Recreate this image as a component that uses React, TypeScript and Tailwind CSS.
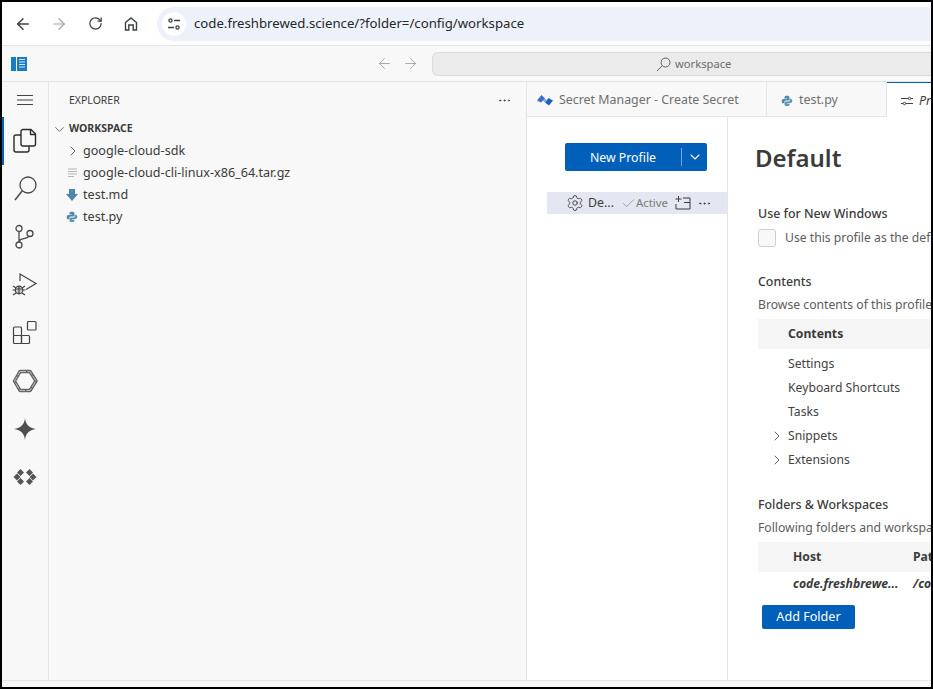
import React from "react";
import { ArrowLeft, ArrowRight, RotateCw, ChevronRight, ChevronDown, Settings, Check, MoreHorizontal } from "lucide-react";

function Py({ s = 12 }: { s?: number }) {
  return (
    <svg width={s} height={s} viewBox="0 0 16 16" className="shrink-0">
      <path d="M8 1C5.6 1 4.6 1.9 4.6 3.2V4.8H8.2V5.4H3.1C1.8 5.4 1 6.5 1 8.2s.8 2.9 2.1 2.9H4.4V9.3c0-1.2 1-2.1 2.2-2.1h2.9c1 0 1.8-.8 1.8-1.8V3.2C11.3 1.9 10 1 8 1Z" fill="#4f87ab" />
      <path d="M8 15c2.4 0 3.4-.9 3.4-2.2v-1.6H7.8v-.6h5.1c1.3 0 2.1-1.1 2.1-2.8s-.8-2.9-2.1-2.9h-1.3v1.8c0 1.2-1 2.1-2.2 2.1H6.5c-1 0-1.8.8-1.8 1.8v2.2C4.7 14.1 6 15 8 15Z" fill="#5f97b8" />
    </svg>
  );
}

function Row({ icon, children }: { icon: React.ReactNode; children: React.ReactNode }) {
  return (
    <div className="flex h-[22px] items-center text-[12.6px] text-[#3b3b3b]">
      <div className="flex w-[34px] shrink-0 justify-end pr-[5px]">{icon}</div>
      <span>{children}</span>
    </div>
  );
}

function TreeItem({ arrow, children }: { arrow?: boolean; children: React.ReactNode }) {
  return (
    <div className="flex h-6 items-center text-[12.2px] text-[#424242]">
      <div className="flex w-[30px] shrink-0 justify-end pr-[3px]">
        {arrow && <ChevronRight size={16} strokeWidth={1.2} className="text-[#424242]" />}
      </div>
      <span>{children}</span>
    </div>
  );
}

function ActivityIcon({ children, active }: { children: React.ReactNode; active?: boolean }) {
  return (
    <div className={`flex h-12 w-full items-center justify-center ${active ? "border-l-2 border-[#005fb8] pr-[2px]" : ""}`}>
      {children}
    </div>
  );
}

export default function App() {
  return (
    <div
      className="flex h-[689px] w-[933px] flex-col overflow-hidden border-2 border-black bg-white"
      style={{ fontFamily: '"Noto Sans", "Open Sans", sans-serif' }}
    >
      {/* Browser bar */}
      <div className="flex h-[44px] shrink-0 items-center border-b border-[#e4e4e4] bg-white">
        <div className="flex w-[155px] shrink-0 items-center pl-[12px]">
          <ArrowLeft size={18} strokeWidth={2} className="text-[#3c4043]" />
          <ArrowRight size={18} strokeWidth={1.6} className="ml-[18px] text-[#a6a8ab]" />
          <RotateCw size={15} strokeWidth={2} className="ml-[20px] text-[#3c4043]" />
          <svg width="16" height="16" viewBox="0 0 16 16" fill="none" stroke="#3c4043" strokeWidth="1.4" className="ml-[20px]">
            <path d="M2.5 14V6.5L8 2l5.5 4.5V14h-3.3V9H5.8v5Z" />
          </svg>
        </div>
        <div className="flex h-[34px] flex-1 items-center rounded-l-[17px] bg-[#edf2fa] pl-[5px]">
          <div className="flex h-[24px] w-[24px] items-center justify-center rounded-full bg-white">
            <svg width="14" height="14" viewBox="0 0 14 14" fill="none" stroke="#3c4043" strokeWidth="1.3">
              <circle cx="3.5" cy="3.5" r="1.6" />
              <path d="M7 3.5h6M1 10.5h6" />
              <circle cx="10.5" cy="10.5" r="1.6" />
            </svg>
          </div>
          <span className="ml-[8px] text-[13.2px] text-[#24272b]">code.freshbrewed.science/?folder=/config/workspace</span>
        </div>
      </div>

      {/* Title bar */}
      <div className="flex h-[36px] shrink-0 items-center border-b border-[#e5e5e5] bg-[#f8f8f8]">
        <svg width="16" height="14" viewBox="0 0 16 14" className="ml-[9px] shrink-0">
          <rect x="0" y="0" width="16" height="14" fill="#1a7cc4" />
          <rect x="5" y="0" width="1" height="14" fill="#f8f8f8" />
          <path d="M8 2.5h6M8 5h6M8 7.5h6M8 10h6" stroke="#d4e6f4" strokeWidth="1" />
        </svg>
        <ArrowLeft size={17} strokeWidth={1} className="ml-[349px] text-[#8a8a8a]" />
        <ArrowRight size={17} strokeWidth={1} className="ml-[9px] text-[#8a8a8a]" />
        <div className="ml-[13px] flex h-[24px] flex-1 items-center rounded-l-[6px] border border-r-0 border-[#dcdcdc] bg-[#ebebeb] pl-[223px] pt-[2px]">
          <svg width="15" height="15" viewBox="0 0 15 15" fill="none" stroke="#5f5f5f" strokeWidth="1">
            <circle cx="9.5" cy="5.5" r="4.5" />
            <path d="M6.3 8.7L1 14" />
          </svg>
          <span className="ml-[4px] text-[11.2px] text-[#6b6b6b]">workspace</span>
        </div>
      </div>

      {/* Workbench */}
      <div className="flex min-h-0 flex-1">
        {/* Activity bar */}
        <div className="flex w-[47px] shrink-0 flex-col border-r border-[#e5e5e5] bg-[#f8f8f8]">
          <div className="flex h-[35px] items-center justify-center">
            <svg width="16" height="12" viewBox="0 0 16 12" stroke="#424242" strokeWidth="1">
              <path d="M0 1.5h16M0 6h16M0 10.5h16" />
            </svg>
          </div>
          <ActivityIcon active>
            <svg width="26" height="26" viewBox="0 0 26 26" fill="none" stroke="#2b2b2b" strokeWidth="1.4" strokeLinejoin="round">
              <path d="M9 7H4a2 2 0 0 0-2 2v13a2 2 0 0 0 2 2h11a2 2 0 0 0 2-2v-4" />
              <path d="M11 1.5h8l4.5 4.5v10a2 2 0 0 1-2 2H11a2 2 0 0 1-2-2v-12.500a2 2 0 0 1 2-2Z" />
              <path d="M18.500 2v4.500h4.500" />
            </svg>
          </ActivityIcon>
          <ActivityIcon>
            <svg width="26" height="26" viewBox="0 0 26 26" fill="none" stroke="#4a4a4a" strokeWidth="1.3">
              <circle cx="16" cy="9" r="8" />
              <path d="M10.300 14.700L3 24" strokeWidth="1.500" />
            </svg>
          </ActivityIcon>
          <ActivityIcon>
            <svg width="26" height="26" viewBox="0 0 26 26" fill="none" stroke="#4a4a4a" strokeWidth="1.3">
              <circle cx="7" cy="4.500" r="3" />
              <circle cx="18" cy="9.500" r="3" />
              <circle cx="7" cy="21" r="3" />
              <path d="M7 7.500V18M7.500 17c1-3 8-1.500 9.500-5" />
            </svg>
          </ActivityIcon>
          <ActivityIcon>
            <svg width="26" height="26" viewBox="0 0 26 26" fill="none" stroke="#424242" strokeWidth="1.2">
              <path d="M8 9V2l16 9.500-10 6" />
              <circle cx="7" cy="18" r="3.800" fill="#5a5a5a" fillOpacity="0.25" />
              <path d="M1 14l3 2M13 14l-3 2M0.500 18h3M13.500 18h-3M1 23l3-2M13 23l-3-2M3.500 17h7M7 14.500V22" />
            </svg>
          </ActivityIcon>
          <ActivityIcon>
            <svg width="26" height="26" viewBox="0 0 26 26" fill="none" stroke="#424242" strokeWidth="1.2">
              <rect x="1.500" y="7" width="8" height="8.500" rx="1" />
              <rect x="1.500" y="15.500" width="8" height="8" rx="1" />
              <rect x="9.500" y="15.500" width="8" height="8" rx="1" />
              <rect x="15.500" y="1.500" width="8.500" height="8.500" rx="1" />
            </svg>
          </ActivityIcon>
          <ActivityIcon>
            <svg width="26" height="26" viewBox="0 0 26 26" fill="none">
              <path d="M8 3.500h10l6 9.500-6 9.500H8L2.500 13Z" stroke="#666666" strokeWidth="3.400" strokeLinejoin="round" />
              <path d="M8 3.500h10l6 9.500-6 9.500H8L2.500 13Z" stroke="#d4d4d4" strokeWidth="0.800" strokeDasharray="6 1.500" strokeLinejoin="round" />
            </svg>
          </ActivityIcon>
          <ActivityIcon>
            <svg width="24" height="24" viewBox="0 0 24 24" fill="#4f4f4f">
              <path d="M12 1c.6 6.400 4 10.200 11 11-7 .8-10.400 4.600-11 11-.6-6.400-4-10.200-11-11 7-.8 10.400-4.600 11-11Z" />
            </svg>
          </ActivityIcon>
          <ActivityIcon>
            <svg width="24" height="18" viewBox="0 0 24 18" fill="#555555">
              <path d="M7.500 1l3.500 3.500L7.500 8 4 4.500ZM16.500 1L20 4.500 16.500 8 13 4.500ZM4 5.500L7.500 9 4 12.500 .5 9ZM20 5.500L23.500 9 20 12.500 16.500 9ZM7.500 10l3.500 3.500L7.500 17 4 13.500ZM16.500 10l3.500 3.500-3.500 3.500-3.500-3.500Z" />
            </svg>
          </ActivityIcon>
        </div>

        {/* Sidebar */}
        <div className="flex w-[478px] shrink-0 flex-col border-r border-[#e5e5e5] bg-[#f8f8f8]">
          <div className="flex h-[36px] shrink-0 items-center justify-between pl-[20px] pr-[14px] pt-[1px]">
            <span className="text-[10.5px] text-[#3b3b3b]">EXPLORER</span>
            <MoreHorizontal size={15} strokeWidth={1.4} className="text-[#424242]" />
          </div>
          <div className="flex h-[22px] items-center pl-[3px]">
            <ChevronDown size={15} strokeWidth={1.2} className="text-[#424242]" />
            <span className="ml-[2px] text-[10.5px] font-bold text-[#3b3b3b]">WORKSPACE</span>
          </div>
          <Row icon={<ChevronRight size={16} strokeWidth={1.2} className="-mr-[3px] text-[#424242]" />}>google-cloud-sdk</Row>
          <Row
            icon={
              <svg width="10" height="10" viewBox="0 0 10 10" stroke="#b5b5b5" strokeWidth="1">
                <path d="M0 1h9M0 3.500h9M0 6h9M0 8.500h6" />
              </svg>
            }
          >
            google-cloud-cli-linux-x86_64.tar.gz
          </Row>
          <Row
            icon={
              <svg width="12" height="12" viewBox="0 0 12 12" fill="#4f87ab">
                <path d="M3 0h6v5h3L6 12 0 5h3Z" />
              </svg>
            }
          >
            test.md
          </Row>
          <Row icon={<Py s={12} />}>test.py</Row>
        </div>

        {/* Editor */}
        <div className="flex min-w-0 flex-1 flex-col">
          {/* Tabs */}
          <div className="flex h-[35px] shrink-0 bg-[#f8f8f8]">
            <div className="flex w-[240px] shrink-0 items-center border-r border-b border-[#e5e5e5] pl-[10px] pt-[3px]">
              <svg width="16" height="11" viewBox="0 0 16 11" className="shrink-0">
                <path d="M4.500 0l3.500 3.500-4 4L0 5.500Z" fill="#2f6fd0" />
                <path d="M11.500 3l4.500 2.500-4 5L8 7.500Z" fill="#1f5fc4" />
                <path d="M8 3.500l2 2-2 2-2-2Z" fill="#7fa8e8" />
              </svg>
              <span className="ml-[6px] whitespace-nowrap text-[12.4px] text-[#6f6f6f]">Secret Manager - Create Secret</span>
            </div>
            <div className="flex w-[120px] shrink-0 items-center border-r border-b border-[#e5e5e5] pl-[14px] pt-[3px]">
              <Py s={12} />
              <span className="ml-[6px] text-[12.4px] text-[#6f6f6f]">test.py</span>
            </div>
            <div className="flex flex-1 items-center overflow-hidden border-t border-[#005fb8] bg-white pl-[14px] pt-[2px]">
              <svg width="12" height="10" viewBox="0 0 12 10" fill="none" stroke="#424242" strokeWidth="1" className="shrink-0">
                <path d="M0 2.500h7M10 2.500h2M0 7.500h2M5 7.500h7" />
                <circle cx="8.500" cy="2.500" r="1.200" />
                <circle cx="3.500" cy="7.500" r="1.200" />
              </svg>
              <span className="ml-[6px] text-[12.4px] italic text-[#3b3b3b]">Pr</span>
            </div>
          </div>

          {/* Profile editor */}
          <div className="flex min-h-0 flex-1">
            <div className="flex w-[201px] shrink-0 flex-col border-r border-[#e5e5e5]">
              <div className="ml-[38px] mt-[26px] flex h-[28px] w-[142px] items-center rounded-[2px] bg-[#005fb8] text-white">
                <span className="flex-1 pt-[3px] text-center text-[12.3px]">New Profile</span>
                <div className="h-[18px] w-px bg-[#7aa9d8]" />
                <div className="flex w-[25px] justify-center">
                  <ChevronDown size={16} strokeWidth={1.6} />
                </div>
              </div>
              <div className="ml-[20px] mt-[21px] flex h-[22px] items-center bg-[#e4e6f1] pl-[19px]">
                <Settings size={18} strokeWidth={1.2} className="text-[#3b3b3b]" />
                <span className="ml-[4px] text-[12.4px] text-[#3b3b3b]">De...</span>
                <Check size={15} strokeWidth={1} className="ml-[7px] text-[#7a7a7a]" />
                <span className="text-[11.4px] text-[#7a7a7a]">Active</span>
                <svg width="16" height="14" viewBox="0 0 16 14" fill="none" stroke="#3b3b3b" strokeWidth="1" className="ml-[7px]">
                  <path d="M3.500 0v6M0.500 3h6M8 2h7v11H1V8M9 6.500h6" />
                </svg>
                <MoreHorizontal size={15} strokeWidth={1.4} className="ml-[6px] text-[#3b3b3b]" />
              </div>
            </div>

            <div className="min-w-0 flex-1 overflow-hidden pl-[30px] text-[12.2px] text-[#3b3b3b]">
              <div className="-ml-[3px] mt-[22px] h-[38px] text-[24px] font-semibold leading-[38px]">Default</div>
              <div className="mt-[27px] h-[20px] text-[12.4px] font-medium leading-[20px]">Use for New Windows</div>
              <div className="mt-[4px] flex h-[20px] items-center whitespace-nowrap">
                <div className="h-[18px] w-[18px] shrink-0 rounded-[3px] border border-[#cecece] bg-[#f8f8f8]" />
                <span className="ml-[9px] text-[#5c5c5c]">Use this profile as the default for new windows</span>
              </div>
              <div className="mt-[24px] h-[20px] text-[12.4px] font-medium leading-[20px]">Contents</div>
              <div className="mt-[3px] h-[20px] whitespace-nowrap leading-[20px] text-[#5c5c5c]">Browse contents of this profile</div>
              <div className="mt-[4px] flex h-[30px] items-center bg-[#f5f5f5] pl-[30px] font-bold">Contents</div>
              <div className="mt-[3px]">
                <TreeItem>Settings</TreeItem>
                <TreeItem>Keyboard Shortcuts</TreeItem>
                <TreeItem>Tasks</TreeItem>
                <TreeItem arrow>Snippets</TreeItem>
                <TreeItem arrow>Extensions</TreeItem>
              </div>
              <div className="mt-[23px] h-[20px] text-[12.4px] font-medium leading-[20px]">Folders &amp; Workspaces</div>
              <div className="mt-[3px] h-[20px] whitespace-nowrap leading-[20px] text-[#5c5c5c]">Following folders and workspaces are using this profile</div>
              <div className="mt-[4px] flex h-[30px] items-center bg-[#f5f5f5] font-bold">
                <span className="w-[155px] shrink-0 pl-[35px]">Host</span>
                <span>Path</span>
              </div>
              <div className="flex h-[24px] items-center whitespace-nowrap font-bold italic">
                <span className="w-[155px] shrink-0 pl-[35px]">code.freshbrewe...</span>
                <span>/config</span>
              </div>
              <div className="ml-[4px] mt-[9px] flex h-[24px] w-[93px] items-center justify-center rounded-[2px] bg-[#005fb8] text-[12.600px] text-white">
                Add Folder
              </div>
            </div>
          </div>
        </div>
      </div>
      {/* Status bar sliver */}
      <div className="h-[7px] shrink-0 border-t border-[#e5e5e5] bg-[#f8f8f8]" />
    </div>
  );
}
